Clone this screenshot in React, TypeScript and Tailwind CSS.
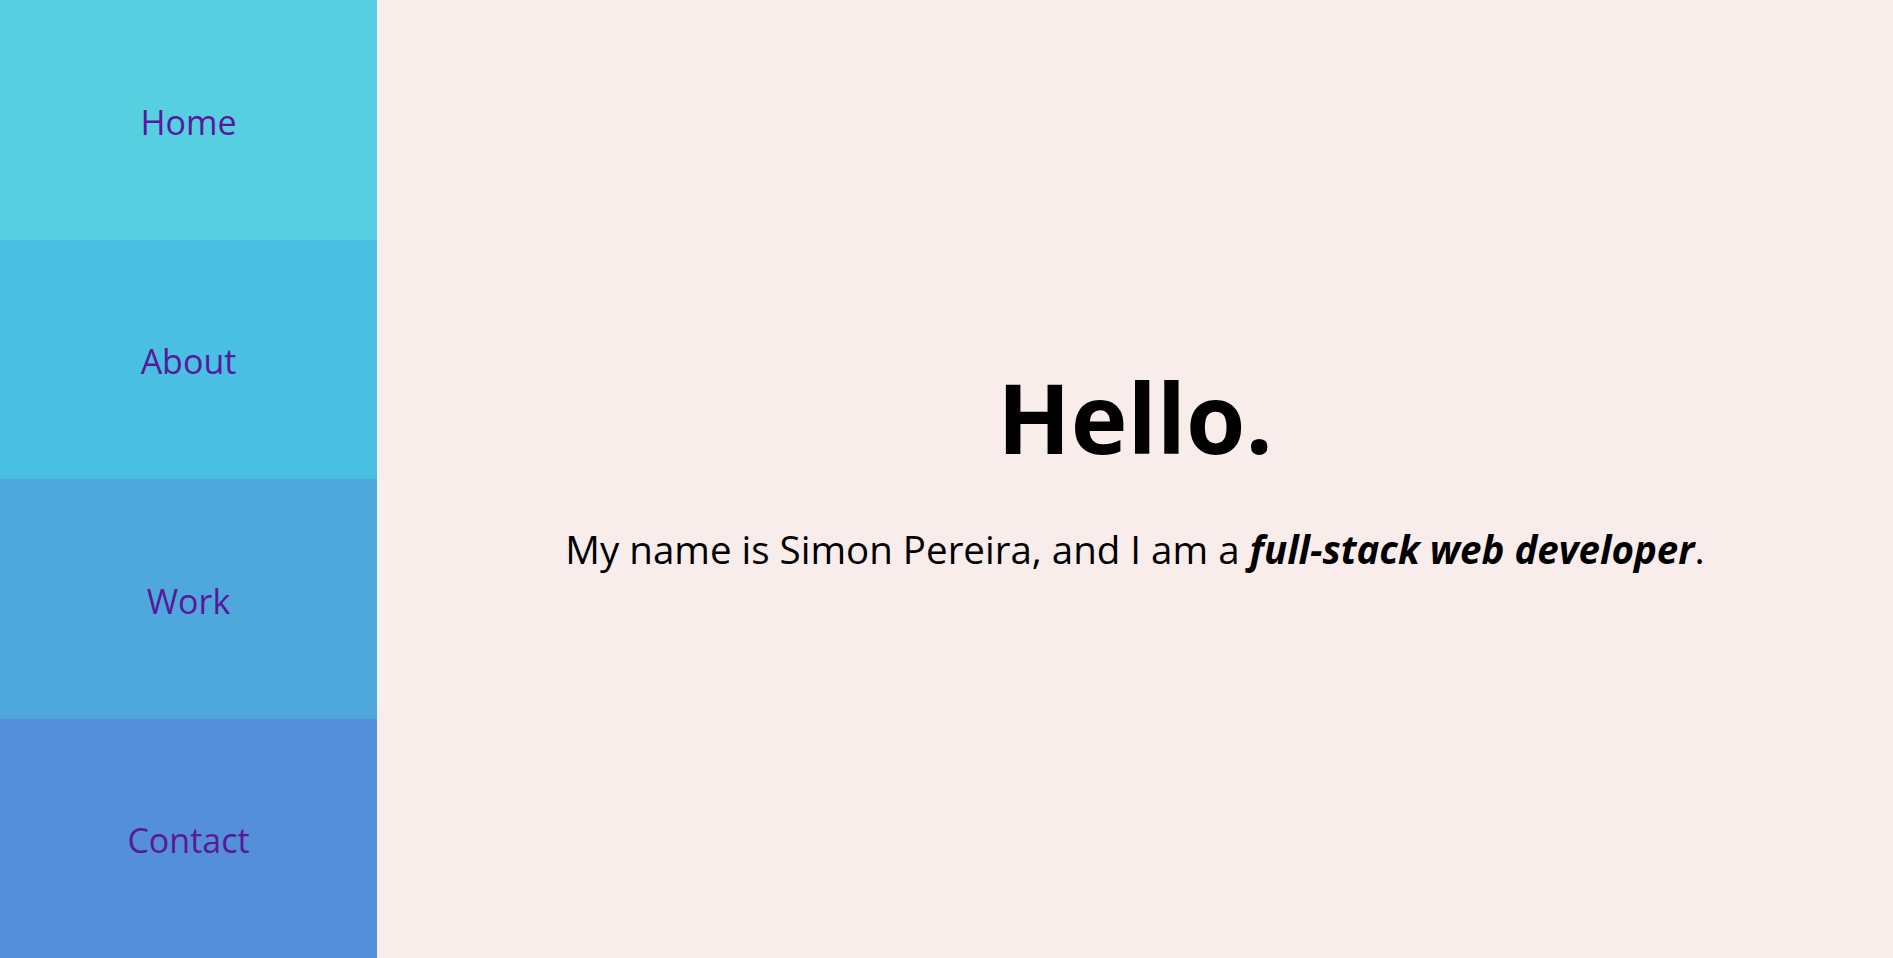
import React from 'react';

const navItems = [
  { label: 'Home', bg: 'bg-[#56cfe1]' },
  { label: 'About', bg: 'bg-[#48bfe3]' },
  { label: 'Work', bg: 'bg-[#4ea8de]' },
  { label: 'Contact', bg: 'bg-[#5390d9]' },
];

export default function App() {
  return (
    <div
      className="flex h-screen w-full bg-[#f8edeb]"
      style={{ fontFamily: '"Open Sans", "Noto Sans", sans-serif' }}
    >
      {/* Sidebar */}
      <nav className="flex w-[377px] shrink-0 flex-col">
        {navItems.map((item) => (
          <a
            key={item.label}
            href="#"
            className={`flex flex-1 items-center justify-center pt-[5px] text-[34px] text-[#5a189a] ${item.bg}`}
          >
            {item.label}
          </a>
        ))}
      </nav>

      {/* Main */}
      <main className="flex flex-1 flex-col items-center justify-center pb-[11px]">
        <h1 className="text-[96px] font-bold leading-none text-black">Hello.</h1>
        <p className="mt-[56px] text-[38.5px] text-black">
          My name is Simon Pereira, and I am a{' '}
          <strong className="font-bold italic">full-stack web developer</strong>.
        </p>
      </main>
    </div>
  );
}
